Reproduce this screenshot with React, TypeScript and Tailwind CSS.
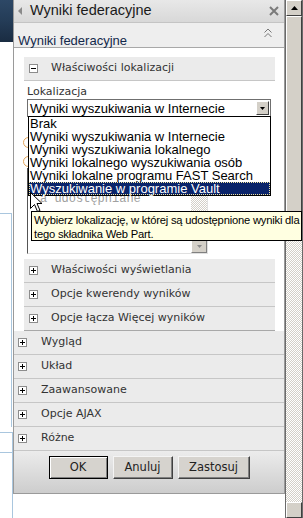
import React from "react";

function BoxIcon({ minus }: { minus?: boolean }) {
  return (
    <svg width="9" height="9" viewBox="0 0 9 9" className="shrink-0">
      <rect x="0.5" y="0.5" width="8" height="8" fill="#fff" stroke="#8c8c8c" />
      <path d="M2 4.5H7" stroke="#000" />
      {!minus && <path d="M4.5 2V7" stroke="#000" />}
    </svg>
  );
}

function InnerRow({ label }: { label: string }) {
  return (
    <div className="h-[24px] flex items-center pl-[5px] bg-[#ebebeb] border-b border-[#c6c6c6]">
      <BoxIcon />
      <span className="ml-[13px] text-[11px] text-[#333] font-['DejaVu_Sans',Verdana,sans-serif]">{label}</span>
    </div>
  );
}

function OuterRow({ label }: { label: string }) {
  return (
    <div className="h-[24px] flex items-center pl-[4px] bg-[#ebebeb] border-b border-[#c6c6c6]">
      <BoxIcon />
      <span className="ml-[14px] text-[11px] text-[#333] font-['DejaVu_Sans',Verdana,sans-serif]">{label}</span>
    </div>
  );
}

function Btn({ label, w, def }: { label: string; w: string; def?: boolean }) {
  return (
    <div
      className={
        "h-[23px] flex items-center justify-center bg-[#d6d3ce] text-[11.5px] text-[#222] font-['DejaVu_Sans',Verdana,sans-serif] " +
        w +
        (def
          ? " border border-black shadow-[inset_1px_1px_0_#fff,inset_-1px_-1px_0_#808080]"
          : " border border-t-[#f4f4f4] border-l-[#f4f4f4] border-b-[#404040] border-r-[#404040] shadow-[inset_-1px_-1px_0_#808080]")
      }
    >
      {label}
    </div>
  );
}

const items = [
  "Brak",
  "Wyniki wyszukiwania w Internecie",
  "Wyniki wyszukiwania lokalnego",
  "Wyniki lokalnego wyszukiwania osób",
  "Wyniki lokalne programu FAST Search",
  "Wyszukiwanie w programie Vault",
];

export default function App() {
  return (
    <div className="relative w-[303px] h-[518px] overflow-hidden bg-white flex">
      {/* left strip */}
      <div className="w-[13px] flex flex-col shrink-0">
        <div className="h-[42px] bg-gradient-to-b from-[#2d4866] via-[#243c57] to-[#1a2c42]" />
        <div className="h-[171px]" />
        <div className="h-[214px] w-[12px] border-t border-r border-[#a9c6de]" />
        <div className="h-[5px]" />
        <div className="h-[20px] border-t border-r border-[#a9c6de]" />
        <div className="flex-1 border-t border-r border-[#a9c6de]" />
      </div>

      {/* panel column */}
      <div className="w-[272px] flex flex-col shrink-0">
        <div className="h-[494px] flex flex-col border-l border-r border-b border-[#9a9a9a]">
          {/* header */}
          <div className="h-[23px] flex items-center bg-gradient-to-b from-[#e8e8e8] to-[#d8d8d8] border-b border-[#c4c4c4]">
            <svg width="4" height="8" viewBox="0 0 4 8" className="ml-[4px]">
              <polygon points="4,0 0,4 4,8" fill="#8a8a8a" />
            </svg>
            <span className="ml-[8px] text-[14.5px] text-[#1a1a1a] font-['Liberation_Sans',Arial,sans-serif]">
              Wyniki federacyjne
            </span>
            <svg width="10" height="10" viewBox="0 0 10 10" className="ml-auto mr-[5px]">
              <path d="M1 1L9 9M9 1L1 9" stroke="#7a7a7a" strokeWidth="2" />
            </svg>
          </div>
          {/* sub header */}
          <div className="h-[25px] flex items-start bg-[#eeeeee] border-b border-[#a8a8a8]">
            <span className="ml-[4px] mt-[10px] leading-[15px] text-[13px] text-[#13294b] font-['Liberation_Sans',Arial,sans-serif]">
              Wyniki federacyjne
            </span>
            <svg width="8" height="10" viewBox="0 0 8 10" className="ml-auto mr-[12px] mt-[5px]">
              <path d="M0.5 4.5L4 1L7.5 4.5M0.5 9L4 5.5L7.5 9" stroke="#777" fill="none" />
            </svg>
          </div>
          {/* body */}
          <div className="bg-white pt-[9px] pl-[10px] pr-[9px]">
            <div className="flex flex-col border-b border-[#a8a8a8]">
              <div className="h-[24px] flex items-center pl-[5px] bg-[#ebebeb] border-b border-[#c6c6c6]">
                <BoxIcon minus />
                <span className="ml-[13px] text-[11px] text-[#333] font-['DejaVu_Sans',Verdana,sans-serif]">
                  Właściwości lokalizacji
                </span>
              </div>
              <div className="pl-[3px] pt-[4px] leading-[14px] text-[11px] text-[#333] font-['DejaVu_Sans',Verdana,sans-serif]">
                Lokalizacja
              </div>
              {/* select */}
              <div className="ml-[3px] w-[244px] h-[18px] flex items-center border border-[#6f6f6f] bg-white">
                <span className="pl-[2px] text-[13px] leading-[15px] text-black font-['Liberation_Sans',Arial,sans-serif]">
                  Wyniki wyszukiwania w Internecie
                </span>
                <div className="ml-auto mr-[1px] w-[13px] h-[14px] flex items-center justify-center bg-[#d4d0c8] border border-t-[#fff] border-l-[#fff] border-b-[#404040] border-r-[#404040]">
                  <svg width="5" height="3" viewBox="0 0 5 3">
                    <polygon points="0,0 5,0 2.5,3" fill="#000" />
                  </svg>
                </div>
              </div>
              {/* hidden content */}
              <div className="h-[142px] pt-[20px] flex flex-col bg-white">
                <div className="ml-[-1px] w-[11px] h-[11px] rounded-full border border-[#e2a55b] bg-white" />
                <div className="ml-[-1px] mt-[8px] w-[11px] h-[11px] rounded-full border border-[#e2a55b] bg-white" />
                <div className="ml-[3px] mt-[1px] w-[181px] h-[86px] flex border-l border-t border-[#555] border-r-[#e0e0e0] border-b-[#e0e0e0] border-r border-b">
                  <div className="flex-1 pt-[24px] pl-[12px] text-[12px] leading-[13px] text-[#a0a0a0] font-['Liberation_Mono','Courier_New',monospace]">
                    a udostępniane
                  </div>
                  <div className="w-[16px] flex flex-col bg-[repeating-conic-gradient(#d4d0c8_0%_25%,#ffffff_0%_50%)] bg-[length:2px_2px]">
                    <div className="mt-auto h-[13px] flex items-center justify-center bg-[#d4d0c8] border border-t-[#fff] border-l-[#fff] border-b-[#808080] border-r-[#808080]">
                      <svg width="5" height="3" viewBox="0 0 5 3">
                        <polygon points="0,0 5,0 2.5,3" fill="#8a8a8a" />
                      </svg>
                    </div>
                  </div>
                </div>
              </div>
              <InnerRow label="Właściwości wyświetlania" />
              <InnerRow label="Opcje kwerendy wyników" />
              <div className="h-[23px] flex items-center pl-[5px] bg-[#ebebeb]">
                <BoxIcon />
                <span className="ml-[13px] text-[11px] text-[#333] font-['DejaVu_Sans',Verdana,sans-serif]">
                  Opcje łącza Więcej wyników
                </span>
              </div>
            </div>
          </div>
          <OuterRow label="Wygląd" />
          <OuterRow label="Układ" />
          <OuterRow label="Zaawansowane" />
          <OuterRow label="Opcje AJAX" />
          <OuterRow label="Różne" />
          {/* buttons */}
          <div className="flex-1 flex justify-center gap-[5px] pt-[5px] bg-gradient-to-b from-[#ececec] to-[#cdcdcd]">
            <Btn label="OK" w="w-[59px]" def />
            <Btn label="Anuluj" w="w-[60px]" />
            <Btn label="Zastosuj" w="w-[72px]" />
          </div>
        </div>
        <div className="flex-1 bg-white" />
      </div>

      {/* scrollbar */}
      <div className="w-[18px] flex flex-col shrink-0 border-l border-r border-[#6a6a6a]">
        <div className="h-[16px] flex items-center justify-center bg-[#d4d0c8] border border-t-[#fff] border-l-[#fff] border-b-[#404040] border-r-[#404040]">
          <svg width="7" height="4" viewBox="0 0 7 4">
            <polygon points="0,4 7,4 3.5,0" fill="#000" />
          </svg>
        </div>
        <div className="h-[222px] bg-[#d4d0c8] border border-t-[#fff] border-l-[#fff] border-b-[#404040] border-r-[#404040]" />
        <div className="h-[272px] bg-[repeating-conic-gradient(#d4d0c8_0%_25%,#ffffff_0%_50%)] bg-[length:2px_2px]" />
        <div className="h-[16px] bg-[#d4d0c8] border border-t-[#fff] border-l-[#fff] border-b-[#404040] border-r-[#404040]" />
      </div>

      {/* dropdown list overlay */}
      <div className="absolute left-[28px] top-[116px] w-[243px] border border-black bg-white flex flex-col">
        {items.map((t, i) => (
          <div
            key={t}
            className={
              "h-[13px] leading-[13px] pl-[1px] text-[13px] font-['Liberation_Sans',Arial,sans-serif] whitespace-nowrap " +
              (i === 5 ? "bg-[#0a246a] text-white outline outline-1 outline-dotted outline-[#f2e6a0] -outline-offset-1" : "text-black")
            }
          >
            {t}
          </div>
        ))}
      </div>

      {/* tooltip */}
      <div className="absolute left-[31px] top-[211px] w-[271px] h-[30px] border border-black bg-[#ffffe1] px-[2px] pt-[1px] text-[11.2px] leading-[14px] tracking-[-0.2px] text-black font-['Liberation_Sans',Arial,sans-serif] whitespace-nowrap">
        Wybierz lokalizację, w której są udostępnione wyniki dla
        <br />
        tego składnika Web Part.
      </div>

      {/* cursor */}
      <svg width="13" height="21" viewBox="0 0 13 21" className="absolute left-[30px] top-[192px]">
        <path d="M0.5 0.5V16.5L4.5 12.5L7.5 19.5L10 18.5L7 11.5H12Z" fill="#fff" stroke="#000" strokeLinejoin="miter" />
      </svg>
    </div>
  );
}
